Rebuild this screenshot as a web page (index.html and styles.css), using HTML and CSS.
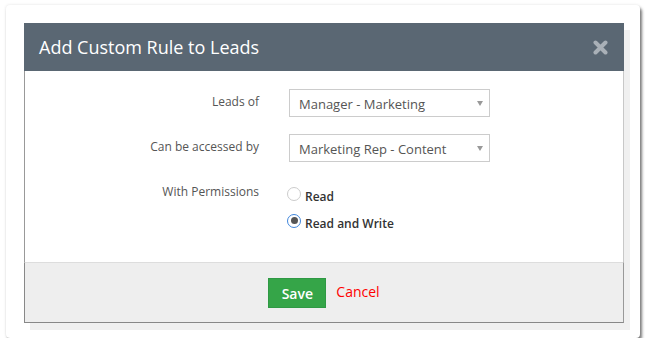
FILE: index.html
```html
<!DOCTYPE html>
<html lang="en">

<head>
    <meta charset="UTF-8">
    <title>Add Custom Rule to Leads</title>
    <link rel="stylesheet" href="styles.css">
</head>

<body>
    <!-- screenshot frame -->
    <div class="frame">
        <div class="modal">
            <!-- header -->
            <div class="modal-header">
                <h3>Add Custom Rule to Leads</h3>
                <span class="close">
                    <svg width="15" height="15" viewBox="0 0 15 15">
                        <path d="M2.5 2.5 L12.5 12.5 M12.5 2.5 L2.5 12.5" stroke="#a9b0b7" stroke-width="4" stroke-linecap="round" />
                    </svg>
                </span>
            </div>

            <!-- form -->
            <div class="modal-body">
                <div class="row">
                    <label class="row-label">Leads of</label>
                    <div class="select">Manager - Marketing<span class="caret"></span></div>
                </div>
                <div class="row">
                    <label class="row-label">Can be accessed by</label>
                    <div class="select">Marketing Rep - Content<span class="caret"></span></div>
                </div>
                <div class="row">
                    <label class="row-label">With Permissions</label>
                    <div class="radios">
                        <div class="radio-item"><span class="radio"></span>Read</div>
                        <div class="radio-item"><span class="radio checked"></span>Read and Write</div>
                    </div>
                </div>
            </div>

            <!-- buttons -->
            <div class="modal-footer">
                <button class="btn-save">Save</button>
                <a class="cancel">Cancel</a>
            </div>
        </div>
    </div>
</body>

</html>
```

FILE: styles.css
```css
body {
    margin: 0;
    background-color: #fff;
    font-family: "Open Sans", "Liberation Sans", sans-serif;
}

/* outer white card */
.frame {
    width: 634px;
    height: 333px;
    margin: 5px 0 0 6px;
    padding: 18px 0 0 18px;
    box-sizing: border-box;
    background-color: #fff;
    border-radius: 4px;
    box-shadow: 2px 3px 3px rgba(0, 0, 0, 0.5), 0 0 3px rgba(0, 0, 0, 0.12);
}

.modal {
    width: 600px;
    box-shadow: 6px 7px 0 rgba(0, 0, 0, 0.06);
}

.modal-header {
    height: 48px;
    background-color: #5a6773;
    display: flex;
    align-items: center;
    justify-content: space-between;
    padding: 0 16px 0 15px;
}

.modal-header h3 {
    margin: 0;
    font-size: 18px;
    font-weight: 400;
    color: #fff;
}

.close {
    display: flex;
    margin-top: 1px;
}

.modal-body {
    height: 191px;
    box-sizing: border-box;
    padding-top: 18px;
    border-left: 1px solid #999;
    border-right: 1px solid #c8c8c8;
    background-color: #fff;
}

.row {
    display: flex;
    margin-bottom: 17px;
}

.row-label {
    width: 234px;
    margin-right: 30px;
    padding-top: 4px;
    text-align: right;
    font-size: 12px;
    line-height: 18px;
    color: #555;
}

.select {
    width: 201px;
    height: 28px;
    box-sizing: border-box;
    padding: 1px 6px 0 9px;
    border: 1px solid #ccc;
    display: flex;
    align-items: center;
    justify-content: space-between;
    font-size: 13px;
    color: #555;
}

.caret {
    border-left: 3px solid transparent;
    border-right: 3px solid transparent;
    border-top: 5px solid #999;
}

.radios {
    margin-left: -2px;
    padding-top: 4px;
}

.radio-item {
    display: flex;
    align-items: center;
    height: 27px;
    font-size: 12px;
    font-weight: 600;
    color: #333;
}

.radio {
    width: 14px;
    height: 14px;
    box-sizing: border-box;
    margin: -6px 4px 0 0;
    border: 1px solid #ccc;
    border-radius: 50%;
    display: flex;
    align-items: center;
    justify-content: center;
}

.radio.checked {
    border-color: #3f86dc;
}

.radio.checked::after {
    content: "";
    width: 7px;
    height: 7px;
    border-radius: 50%;
    background-color: #555;
}

.modal-footer {
    height: 61px;
    box-sizing: border-box;
    padding-top: 15px;
    background-color: #eee;
    border-top: 1px solid #ddd;
    border-bottom: 1px solid #888;
    border-left: 1px solid #888;
    border-right: 1px solid #999;
    display: flex;
    justify-content: center;
    align-items: flex-start;
}

.btn-save {
    width: 58px;
    height: 30px;
    padding: 0;
    border: 1px solid #2f9944;
    background-color: #35a548;
    color: #fff;
    font-family: "Open Sans", "Liberation Sans", sans-serif;
    font-size: 14px;
    font-weight: 600;
}

.cancel {
    margin: 4px 0 0 10px;
    font-size: 14px;
    color: #f00;
    cursor: pointer;
}
```
